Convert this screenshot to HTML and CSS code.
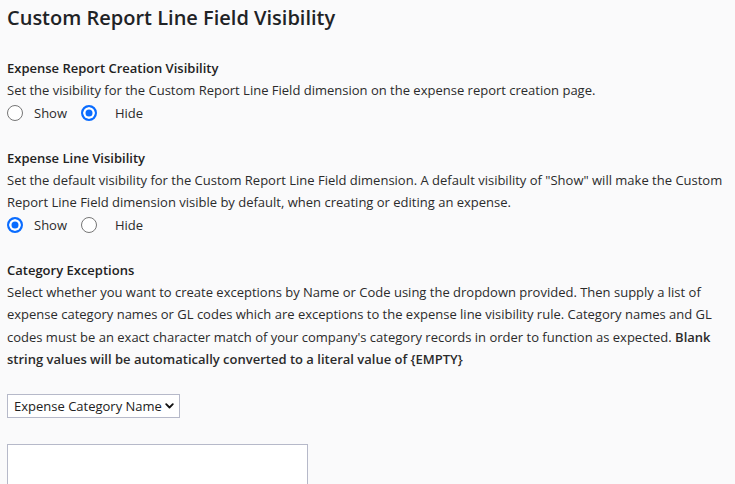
FILE: index.html
```html
<!DOCTYPE html>
<html>
<head>
<meta charset="utf-8">
<link rel="stylesheet" href="styles.css">
</head>
<body>
<div class="page">
  <h1 class="title">Custom Report Line Field Visibility</h1>

  <section class="section">
    <h2 class="section-title">Expense Report Creation Visibility</h2>
    <p class="desc">Set the visibility for the Custom Report Line Field dimension on the expense report creation page.</p>
    <div class="radios">
      <label class="opt"><input type="radio" name="creation" class="radio"><span class="opt-label">Show</span></label>
      <label class="opt"><input type="radio" name="creation" class="radio" checked><span class="opt-label">Hide</span></label>
    </div>
  </section>

  <section class="section">
    <h2 class="section-title">Expense Line Visibility</h2>
    <p class="desc">Set the default visibility for the Custom Report Line Field dimension. A default visibility of "Show" will make the Custom Report Line Field dimension visible by default, when creating or editing an expense.</p>
    <div class="radios">
      <label class="opt"><input type="radio" name="line" class="radio" checked><span class="opt-label">Show</span></label>
      <label class="opt"><input type="radio" name="line" class="radio"><span class="opt-label">Hide</span></label>
    </div>
  </section>

  <section class="section">
    <h2 class="section-title">Category Exceptions</h2>
    <p class="desc">Select whether you want to create exceptions by Name or Code using the dropdown provided. Then supply a list of expense category names or GL codes which are exceptions to the expense line visibility rule. Category names and GL codes must be an exact character match of your company's category records in order to function as expected. <strong>Blank string values will be automatically converted to a literal value of {EMPTY}</strong></p>
    <div class="select">
      <span class="select-text">Expense Category Name</span>
      <svg class="chevron" width="9" height="6" viewBox="0 0 9 6"><path d="M1.2 1.2 L4.5 4.5 L7.8 1.2" fill="none" stroke="#111" stroke-width="1.8" stroke-linecap="round" stroke-linejoin="round"/></svg>
    </div>
    <textarea class="textarea"></textarea>
  </section>
</div>
</body>
</html>
```

FILE: styles.css
```css
html, body {
  margin: 0;
  padding: 0;
  background: #fafafb;
}
body {
  font-family: "Open Sans", "Noto Sans", sans-serif;
  font-size: 13px;
  color: #2b2b2b;
}
.page {
  padding: 5px 7px 0 7px;
}
.title {
  margin: 0;
  font-size: 20px;
  line-height: 26px;
  font-weight: 600;
  color: #1f2326;
}
.section {
  margin-top: 26px;
}
.section + .section {
  margin-top: 22px;
}
.section-title {
  margin: 0;
  font-size: 13px;
  line-height: 22px;
  font-weight: 600;
  color: #222;
}
.desc {
  margin: 0;
  line-height: 22.5px;
}
.desc strong {
  font-weight: 600;
}
.radios {
  display: flex;
  align-items: center;
  height: 23px;
}
.opt {
  display: flex;
  align-items: center;
}
.opt + .opt .opt-label {
  margin-left: 7px;
}
.radio {
  appearance: none;
  -webkit-appearance: none;
  margin: 0 11px 0 0;
  width: 16px;
  height: 16px;
  border: 1px solid #767676;
  border-radius: 50%;
  background: #fff;
  box-sizing: border-box;
}
.radio:checked {
  border: 2px solid #0a6cff;
  background: #0a6cff;
  box-shadow: inset 0 0 0 2.5px #fff;
}
.opt-label {
  margin-right: 14px;
}
.select {
  margin-top: 23px;
  width: fit-content;
  height: 24px;
  box-sizing: border-box;
  border: 1px solid #b6b9c9;
  background: #fff;
  display: flex;
  align-items: center;
  gap: 3px;
  padding: 0 5px 0 6px;
  color: #222;
  white-space: nowrap;
}
.chevron {
  flex: none;
}
.textarea {
  display: block;
  margin-top: 26px;
  width: 301px;
  height: 80px;
  box-sizing: border-box;
  border: 1px solid #b6b9c9;
  background: #fff;
  resize: none;
}
```
